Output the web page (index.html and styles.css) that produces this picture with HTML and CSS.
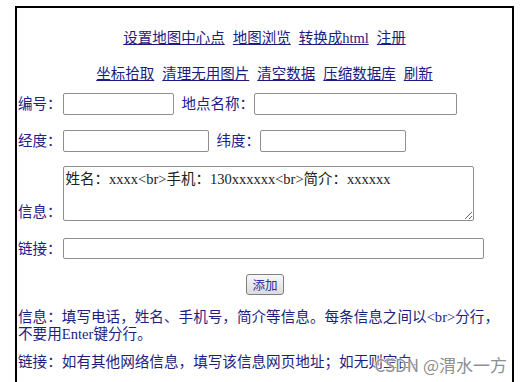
FILE: index.html
```
<!DOCTYPE html>
<html lang="zh-CN">
<head>
<meta charset="utf-8">
<title>地图信息录入</title>
<link rel="stylesheet" href="styles.css">
</head>
<body>
<div class="frame">
  <div class="nav nav-first">
    <a href="#">设置地图中心点</a>
    <a href="#">地图浏览</a>
    <a href="#">转换成html</a>
    <a href="#">注册</a>
  </div>
  <div class="nav nav-second">
    <a href="#">坐标拾取</a>
    <a href="#">清理无用图片</a>
    <a href="#">清空数据</a>
    <a href="#">压缩数据库</a>
    <a href="#">刷新</a>
  </div>
  <div class="row row-1">
    <span class="label">编号：</span><input class="field w-id" type="text">
    <span class="label label-gap">地点名称：</span><input class="field w-name" type="text">
  </div>
  <div class="row row-2">
    <span class="label">经度：</span><input class="field w-coord" type="text">
    <span class="label label-gap">纬度：</span><input class="field w-coord" type="text">
  </div>
  <div class="row row-info">
    <span class="label">信息：</span><textarea class="area">姓名：xxxx&lt;br&gt;手机：130xxxxxx&lt;br&gt;简介：xxxxxx</textarea>
  </div>
  <div class="row row-link">
    <span class="label">链接：</span><input class="field w-link" type="text">
  </div>
  <div class="btn-row">
    <button class="btn" type="button">添加</button>
  </div>
  <p class="note note-first">信息：填写电话，姓名、手机号，简介等信息。每条信息之间以&lt;br&gt;分行，<br>不要用Enter键分行。</p>
  <p class="note note-second">链接：如有其他网络信息，填写该信息网页地址；如无则空白。</p>
  <span class="watermark">CSDN @渭水一方</span>
</div>
</body>
</html>
```
FILE: styles.css
```
html, body {
  margin: 0;
  padding: 0;
  background: #ffffff;
  overflow: hidden;
}

body {
  font-family: "Liberation Serif", "Noto Sans CJK SC", serif;
  font-size: 14.5px;
  color: #1e1e7e;
  text-autospace: no-autospace;
}

.frame {
  position: relative;
  margin: 6px 0 0 15px;
  width: 499px;
  height: 376px;
  box-sizing: border-box;
  border: 2px solid #000;
  border-bottom: none;
  padding: 0 0 0 1px;
}

.nav {
  display: flex;
  justify-content: center;
  gap: 8px;
  line-height: 20px;
  height: 20px;
  margin-left: -1px;
}

.nav a {
  color: #1c1c80;
  text-decoration: underline;
  text-underline-offset: 1px;
}

.nav-first { margin-top: 20px; }
.nav-second { margin-top: 16px; }

.row {
  display: flex;
  align-items: center;
}

.row-1 { margin-top: 9px; height: 22px; }
.row-2 { margin-top: 15px; height: 22px; }
.row-info { margin-top: 14px; align-items: flex-end; }
.row-link { margin-top: 17px; height: 21px; }

.label {
  line-height: 16px;
  white-space: nowrap;
  color: #20208a;
}

.label-gap { margin-left: 8px; }

.field {
  box-sizing: border-box;
  height: 22px;
  margin: 0 0 0 1px;
  padding: 1px 3px;
  border: 1px solid #8e8e8e;
  border-radius: 2px;
  background: #fff;
  font: inherit;
}

.w-id { width: 111px; }
.w-name { width: 203px; margin-left: 0; }
.w-coord { width: 146px; }
.row-2 .label-gap + .w-coord { margin-left: 0; }
.w-link { width: 421px; height: 21px; }

.area {
  box-sizing: border-box;
  width: 411px;
  height: 55px;
  margin: 0 0 0 1px;
  padding: 4px 2px;
  border: 1px solid #8e8e8e;
  border-radius: 2px;
  font-family: "Liberation Serif", "Noto Sans CJK SC", serif;
  font-size: 14.5px;
  line-height: 16px;
  color: #202020;
  background: #fff;
}

.row-info .label { margin-bottom: 1px; }

.btn-row {
  display: flex;
  justify-content: center;
  margin-top: 15px;
}

.btn {
  box-sizing: border-box;
  width: 38px;
  height: 21px;
  padding: 0;
  border: 1px solid #7f7f7f;
  border-radius: 3px;
  background: linear-gradient(#f7f7f7, #dcdcdc);
  font-family: "Noto Sans CJK SC", sans-serif;
  font-size: 12.5px;
  line-height: 19px;
  color: #2c2cb0;
}

.note {
  margin: 0;
  font-size: 14.6px;
  line-height: 17px;
  color: #1e1e80;
  white-space: nowrap;
}

.note-first { margin-top: 14px; }
.note-second { margin-top: 11px; }

.watermark {
  position: absolute;
  right: 5px;
  top: 347px;
  font-family: "Noto Sans CJK SC", sans-serif;
  font-size: 17px;
  line-height: 20px;
  color: rgba(128, 128, 128, 0.9);
  text-shadow: 0 0 1px #fff, 0 0 2px #fff, 0 0 3px #fff;
  white-space: nowrap;
  pointer-events: none;
}
```
